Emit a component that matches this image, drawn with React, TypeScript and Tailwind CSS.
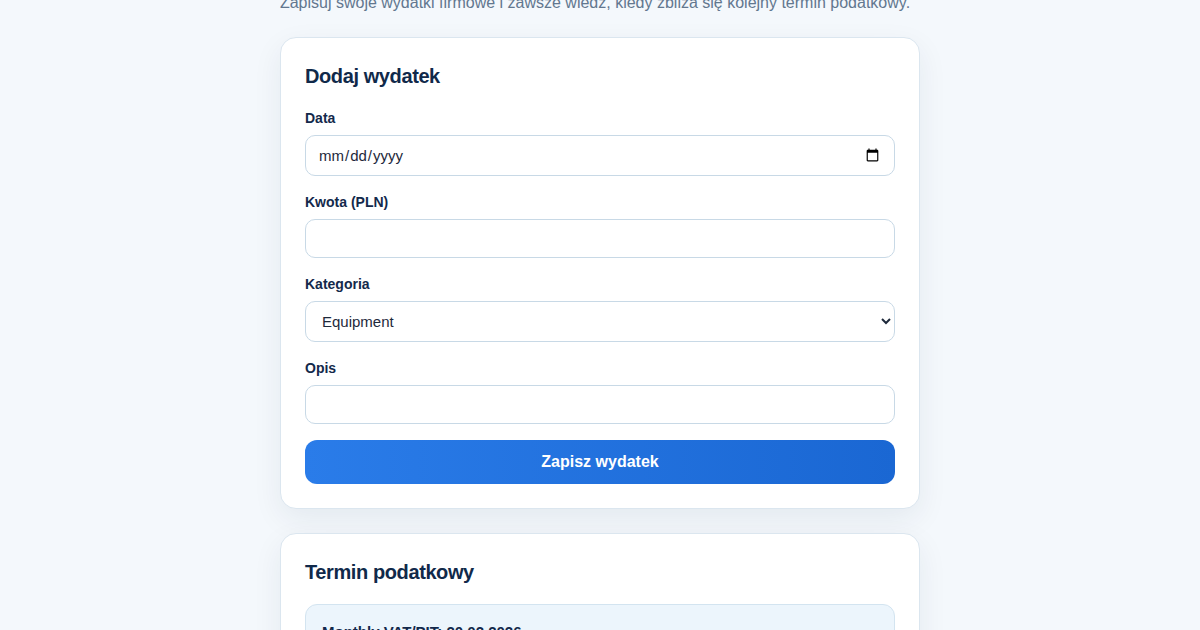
import React from 'react';

const fields = [
  { label: 'Kwota (PLN)', type: 'text' },
];

const Field = ({ label, children }: { label: string; children: React.ReactNode }) => (
  <div className="mb-4">
    <label className="block text-sm font-bold text-[#13294b] mb-[7px] leading-5">{label}</label>
    {children}
  </div>
);

const inputCls =
  'block w-full rounded-[10px] border border-[#c8d9e6] bg-white px-3 py-2.5 text-[15px] leading-[17px] text-[#1e293b] outline-none';

export default function App() {
  return (
    <div className="min-h-screen bg-[#f4f8fc] font-['Liberation_Sans',Arial,sans-serif] overflow-hidden">
      <div className="w-[640px] mx-auto -mt-[11px]">
        <p className="text-center text-base leading-[28px] text-[#62778f] mb-[20px] ml-[-50px] mr-[-40px]">
          Zapisuj swoje wydatki firmowe i zawsze wiedz, kiedy zbliża się kolejny termin podatkowy.
        </p>

        {/* Add expense */}
        <div className="bg-white border border-[#dbe6ef] rounded-2xl p-6 shadow-[0_10px_30px_rgba(15,42,74,0.07)]">
          <h2 className="text-xl leading-7 font-bold tracking-[-0.02em] text-[#10294a] mb-[18px]">Dodaj wydatek</h2>
          <Field label="Data">
            <input type="date" className={inputCls + ' h-[41px]'} />
          </Field>
          {fields.map((f) => (
            <Field key={f.label} label={f.label}>
              <input type={f.type} className={inputCls} />
            </Field>
          ))}
          <Field label="Kategoria">
            <select className={inputCls + ' h-[41px]'} defaultValue="Equipment">
              <option>Equipment</option>
              <option>Software</option>
              <option>Travel</option>
              <option>Office</option>
            </select>
          </Field>
          <Field label="Opis">
            <input type="text" className={inputCls} />
          </Field>
          <button className="w-full h-11 rounded-xl bg-gradient-to-r from-[#2a7ce9] to-[#1a67d3] text-white font-bold text-base">
            Zapisz wydatek
          </button>
        </div>

        {/* Tax deadline */}
        <div className="mt-6 bg-white border border-[#dbe6ef] rounded-2xl p-6 shadow-[0_10px_30px_rgba(15,42,74,0.07)]">
          <h2 className="text-xl leading-7 font-bold tracking-[-0.02em] text-[#10294a] mb-[18px]">Termin podatkowy</h2>
          <div className="rounded-xl border border-[#d3e4f0] bg-[#ecf5fc] px-4 py-4">
            <p className="text-[15px] font-bold text-[#13294b]">Monthly VAT/PIT: 20.02.2026</p>
            <p className="text-sm text-[#64748b] mt-1">Pozostało dni: 14</p>
          </div>
        </div>
      </div>
    </div>
  );
}
